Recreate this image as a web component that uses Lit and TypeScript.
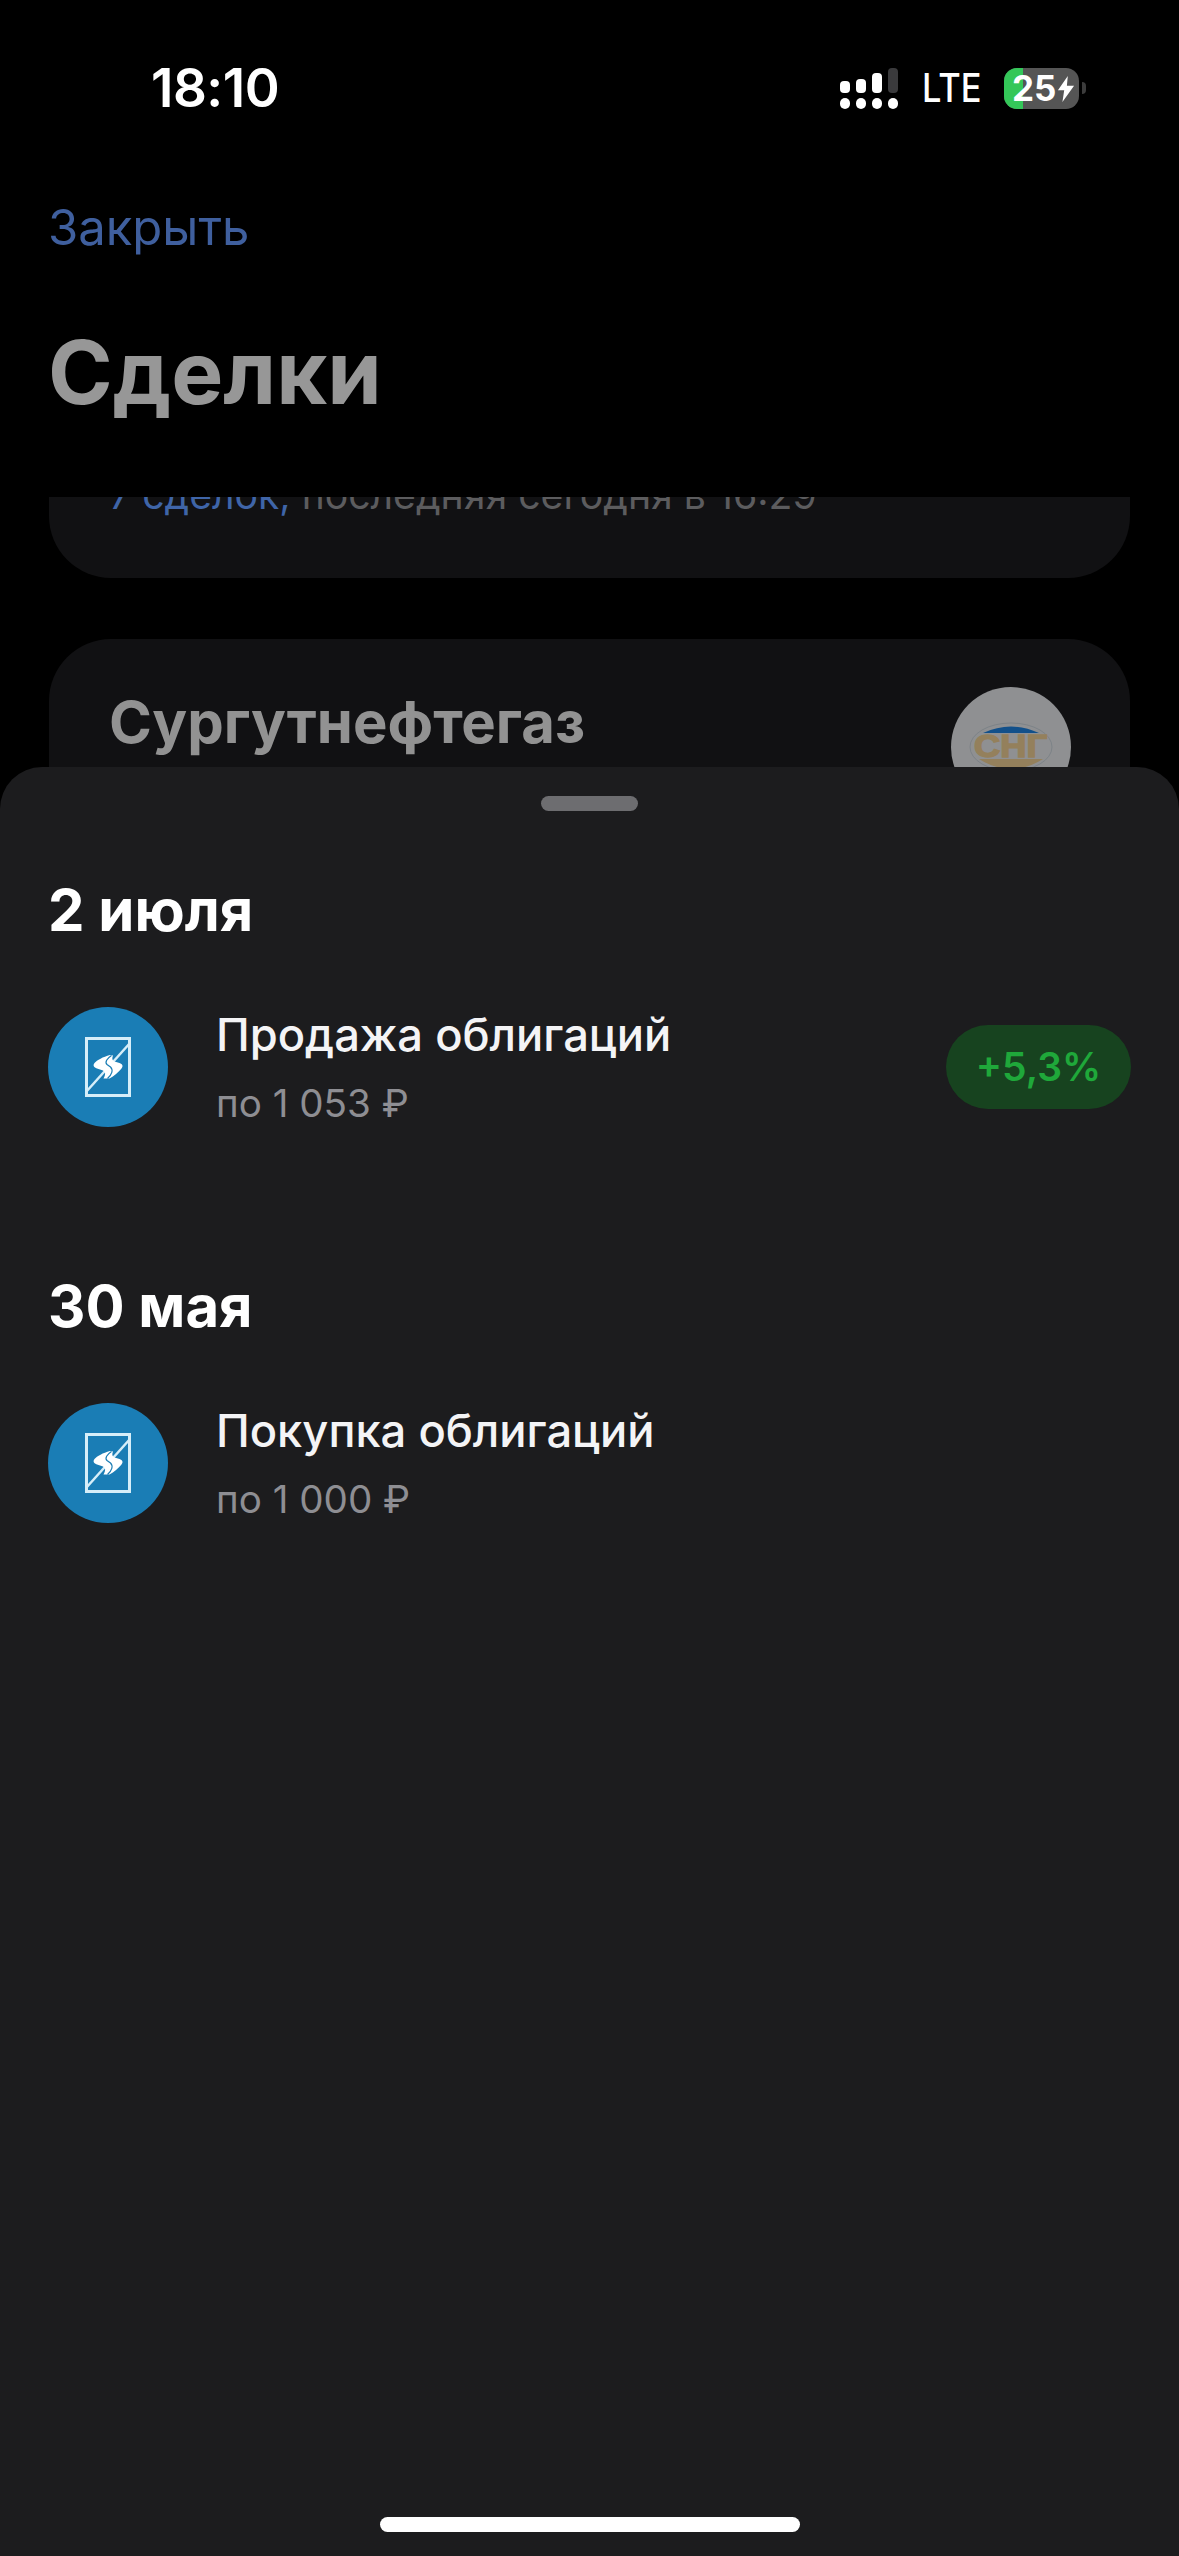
import { LitElement, html, css, svg } from 'lit';
import { customElement } from 'lit/decorators.js';

const font = css`Inter, "Noto Sans", sans-serif`;

const bondLogo = html`<svg class="logo" viewBox="0 0 46 60" width="46" height="60">
  <rect x="1.5" y="1.5" width="43" height="57" fill="none" stroke="#d6eef9" stroke-width="3"></rect>
  <path d="M1 55 L45 6" fill="none" stroke="#d6eef9" stroke-width="2.5"></path>
  <path fill="#fff" d="M25 18 C18 20 12 23 9.5 26 C7.5 28.5 9 30.5 12 31.5 L18 33.5 C21 35 20.5 38 18.5 41.5 L24.5 41.5 C29 39 33.5 35 36.5 31.5 C38.5 29 37.5 27 34.5 26 L29.5 24.5 C27 23.5 27 21 28 18.5 Z"></path>
  <path fill="none" stroke="#1a7db5" stroke-width="1.2" d="M26.5 18.5 C22 21.5 19.5 25 22 27.5 L25.5 30 C28.5 33 27 37.5 22.5 41.5"></path>
</svg>`;

const trades = [
  { date: '2 июля', title: 'Продажа облигаций', price: 'по 1 053 ₽', badge: '+5,3%' },
  { date: '30 мая', title: 'Покупка облигаций', price: 'по 1 000 ₽', badge: '' },
];

@customElement('app-root')
export class AppRoot extends LitElement {
  static styles = css`
    :host {
      display: block;
      position: relative;
      width: 1179px;
      height: 2556px;
      overflow: hidden;
      background: #000;
      font-family: ${font};
      color: #fff;
    }
    .status {
      display: flex;
      align-items: center;
      justify-content: space-between;
      height: 176px;
      padding: 0 93px 0 151px;
      box-sizing: border-box;
    }
    .time {
      font-size: 53px;
      font-weight: 600;
      letter-spacing: -0.5px;
    }
    .status-right {
      display: flex;
      align-items: center;
      gap: 24px;
    }
    .lte {
      display: block;
      width: 58px;
      font-size: 40px;
      font-weight: 500;
      line-height: 40px;
      white-space: nowrap;
      transform: scaleX(0.86);
      transform-origin: left;
    }
    .battery {
      position: relative;
      width: 75px;
      height: 41px;
      border-radius: 13px;
      overflow: hidden;
      background: #555;
      font-size: 35px;
      font-weight: 700;
      line-height: 41px;
      padding-left: 8px;
      box-sizing: border-box;
    }
    .battery-fill {
      position: absolute;
      left: 0;
      top: 0;
      bottom: 0;
      width: 19px;
      background: #34c759;
    }
    .battery-text {
      position: relative;
    }
    .battery-wrap {
      display: flex;
      align-items: center;
      gap: 3px;
    }
    .nub {
      width: 4px;
      height: 12px;
      background: #3c3c3c;
      border-radius: 0 4px 4px 0;
    }
    .bolt {
      position: absolute;
      right: 4px;
      top: 8px;
    }
    .close {
      margin: 22px 0 0;
      padding-left: 48px;
      font-size: 49px;
      line-height: 60px;
      color: #3f5f9e;
    }
    .page-title {
      margin: 64px 0 0;
      padding-left: 48px;
      font-size: 87.5px;
      line-height: 100px;
      font-weight: 700;
      color: #979797;
    }
    .scroll {
      height: 280px;
      margin-top: 75px;
      overflow: hidden;
    }
    .card {
      margin: 0 49px;
      background: #111113;
    }
    .card-top {
      height: 81px;
      border-radius: 0 0 62px 62px;
      padding: 0 60px;
      font-size: 39.2px;
      line-height: 40px;
      color: #5c5c5e;
      overflow: hidden;
      margin-bottom: 61px;
    }
    .card-top .line {
      display: block;
      margin-top: -22px;
    }
    .card-top b {
      font-weight: 400;
      color: #3f65a8;
    }
    .card-main {
      display: flex;
      justify-content: space-between;
      height: 300px;
      border-radius: 62px 62px 0 0;
      padding: 48px 59px 0 60px;
    }
    .card-name {
      font-size: 58px;
      font-weight: 700;
      line-height: 70px;
      color: #929292;
    }
    .sng {
      width: 120px;
      height: 120px;
      border-radius: 50%;
      background: #8f9092;
      display: flex;
      align-items: center;
      justify-content: center;
    }
    .sheet {
      position: absolute;
      left: 0;
      right: 0;
      top: 767px;
      bottom: 0;
      background: #1c1c1e;
      border-radius: 42px 42px 0 0;
      display: flex;
      flex-direction: column;
      padding: 29px 0 24px;
      box-sizing: border-box;
    }
    .handle {
      align-self: center;
      width: 97px;
      height: 15px;
      border-radius: 8px;
      background: #6d6d70;
    }
    .groups {
      flex: 1;
      padding: 64px 48px 0 48px;
    }
    .group {
      height: 396px;
    }
    .date {
      margin: 0;
      font-size: 58px;
      font-weight: 700;
      line-height: 70px;
    }
    .row {
      display: flex;
      align-items: center;
      gap: 48px;
      margin-top: 62px;
    }
    .avatar {
      width: 120px;
      height: 120px;
      border-radius: 50%;
      background: #1a7db5;
      flex: none;
      display: flex;
      align-items: center;
      justify-content: center;
    }
    .info {
      flex: 1;
    }
    .title {
      font-size: 45.3px;
      line-height: 54px;
      font-weight: 500;
      color: #f4f4f6;
    }
    .price {
      margin-top: 18px;
      font-size: 38.6px;
      line-height: 46px;
      color: #8e8e93;
    }
    .badge {
      width: 185px;
      height: 84px;
      border-radius: 42px;
      background: #17431f;
      color: #1fa83a;
      font-size: 39px;
      font-weight: 600;
      line-height: 84px;
      text-align: center;
    }
    .home {
      align-self: center;
      width: 420px;
      height: 15px;
      border-radius: 8px;
      background: #fff;
    }
  `;

  renderSignal() {
    const bars = [
      { x: 0, y: 13, h: 12 },
      { x: 16, y: 11, h: 14 },
      { x: 32, y: 5, h: 20 },
      { x: 48, y: 0, h: 25 },
    ];
    return html`<svg width="58" height="41" viewBox="0 0 58 41">
      ${bars.map(
        (b, i) => svg`
          <rect x=${b.x} y=${b.y} width="10" height=${b.h} rx="4" fill=${i === 3 ? '#3a3a3c' : '#fff'}></rect>
          <rect x=${b.x} y="30" width="10" height="11" rx="5" fill="#fff"></rect>`
      )}
    </svg>`;
  }

  renderSng() {
    return html`<svg width="84" height="52" viewBox="0 0 84 52">
      <ellipse cx="42" cy="26" rx="41" ry="24" fill="#8f9092" stroke="#7d8388" stroke-width="1"></ellipse>
      <path d="M14 12 Q42 -1 70 12 Z" fill="#12508a"></path>
      <text x="5" y="36" font-size="31" font-weight="700" fill="#94805c" stroke="#94805c" stroke-width="1.5" textLength="73" lengthAdjust="spacingAndGlyphs" font-family="Liberation Sans, sans-serif">СНГ</text>
      <path d="M10 38 H74 Q42 58 10 38 Z" fill="#94805c"></path>
    </svg>`;
  }

  render() {
    return html`
      <div class="status">
        <span class="time">18:10</span>
        <div class="status-right">
          ${this.renderSignal()}
          <span class="lte">LTE</span>
          <div class="battery-wrap">
            <div class="battery">
              <div class="battery-fill"></div>
              <span class="battery-text">25</span>
              <svg class="bolt" width="18" height="26" viewBox="0 0 18 29">
                <path d="M11 0 L0 16 H7 L5 29 L18 11 H10 Z" fill="#fff"></path>
              </svg>
            </div>
            <div class="nub"></div>
          </div>
        </div>
      </div>
      <p class="close">Закрыть</p>
      <h1 class="page-title">Сделки</h1>
      <div class="scroll">
        <div class="card card-top">
          <span class="line"><b>7 сделок,</b> последняя сегодня в 16:29</span>
        </div>
        <div class="card card-main">
          <span class="card-name">Сургутнефтегаз</span>
          <div class="sng">${this.renderSng()}</div>
        </div>
      </div>
      <section class="sheet">
        <div class="handle"></div>
        <div class="groups">
          ${trades.map(
            (t) => html`<div class="group">
              <h2 class="date">${t.date}</h2>
              <div class="row">
                <div class="avatar">${bondLogo}</div>
                <div class="info">
                  <div class="title">${t.title}</div>
                  <div class="price">${t.price}</div>
                </div>
                ${t.badge ? html`<div class="badge">${t.badge}</div>` : ''}
              </div>
            </div>`
          )}
        </div>
        <div class="home"></div>
      </section>
    `;
  }
}
